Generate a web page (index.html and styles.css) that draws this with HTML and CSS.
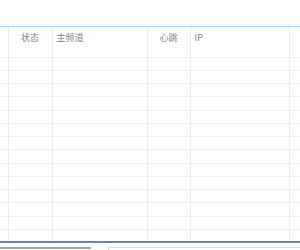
FILE: index.html
```html
<!DOCTYPE html>
<html>
<head>
<meta charset="utf-8">
<link rel="stylesheet" href="styles.css">
</head>
<body>

<!-- device list grid -->
<div class="grid-wrap">
  <table class="grid">
    <colgroup>
      <col class="c-check">
      <col class="c-state">
      <col class="c-chan">
      <col class="c-beat">
      <col class="c-ip">
      <col class="c-rest">
    </colgroup>
    <thead>
      <tr>
        <th></th>
        <th>状态</th>
        <th class="left">主频道</th>
        <th>心跳</th>
        <th class="left">IP</th>
        <th></th>
      </tr>
    </thead>
    <tbody id="rows"></tbody>
  </table>
</div>

<div class="footer">
  <div class="hscroll"></div>
  <div class="panel"></div>
</div>

<script>
var rows = document.getElementById("rows");
var html = "";
for (var i = 0; i < 14; i++) {
  html += "<tr><td></td><td></td><td></td><td></td><td></td><td></td></tr>";
}
rows.innerHTML = html;
</script>
</body>
</html>
```

FILE: styles.css
```css
body {
  margin: 0;
  background-color: #ffffff;
  font-family: "Noto Sans CJK SC", "Noto Sans", sans-serif;
}

.grid-wrap {
  margin-top: 26px;
  height: 214px;
  overflow: hidden;
  border-top: 1px solid #a9d2e8;
  border-bottom: 2px solid #5b8ea6;
}

.grid {
  width: 300px;
  table-layout: fixed;
  border-collapse: collapse;
}

.c-check { width: 8px; }
.c-state { width: 44px; }
.c-chan  { width: 95px; }
.c-beat  { width: 43px; }
.c-ip    { width: 99px; }
.c-rest  { width: 11px; }

.grid th {
  height: 30px;
  padding: 4px 0 0 0;
  box-sizing: border-box;
  vertical-align: top;
  font-size: 9px;
  line-height: 13px;
  font-weight: normal;
  color: #858585;
  text-align: center;
  border-right: 1px solid #ececec;
  border-bottom: 1px solid #f1f1f1;
}

.grid th.left {
  text-align: left;
  padding-left: 4px;
}

.grid td {
  height: 12.25px;
  padding: 0;
  border-right: 1px solid #ececec;
  border-bottom: 1px solid #f1f1f1;
}

.grid th:last-child,
.grid td:last-child {
  border-right: none;
}

.footer {
  display: flex;
  align-items: flex-start;
  padding-top: 4px;
  height: 3px;
}

.hscroll {
  width: 91px;
  height: 2px;
  background-color: #a3a3a3;
}

.panel {
  flex: 1;
  margin-left: 17px;
  height: 3px;
  border-top: 1px solid #dcdcdc;
  border-left: 1px solid #dcdcdc;
}
```
